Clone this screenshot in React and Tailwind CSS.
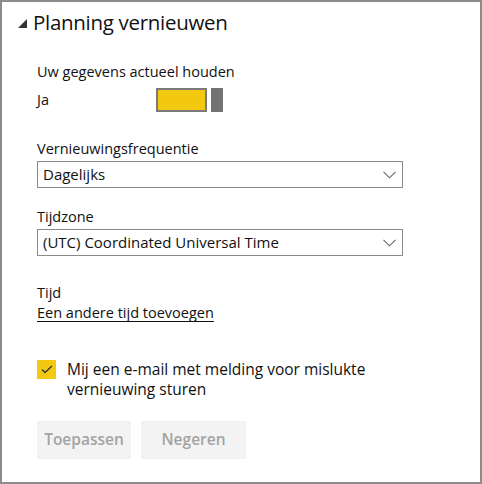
import { useState } from 'react';

function Chevron() {
  return (
    <svg width="13" height="8" viewBox="0 0 13 8" className="shrink-0">
      <path d="M0.5 0.8 L6.5 6.8 L12.5 0.8" fill="none" stroke="#666" strokeWidth="1.1" />
    </svg>
  );
}

function Dropdown({ value }) {
  return (
    <div className="flex items-center justify-between h-[27px] w-[366px] border border-[#8a8a8a] pl-[5px] pr-[6px]">
      <span className="text-[15px] text-[#111]">{value}</span>
      <Chevron />
    </div>
  );
}

export default function App() {
  const [aan, setAan] = useState(true);
  const [mail, setMail] = useState(true);

  return (
    <div
      className="w-[482px] h-[484px] border-2 border-[#8c8c8c] bg-white text-[#111] overflow-hidden"
      style={{ fontFamily: '"Open Sans", "Noto Sans", Arial, sans-serif' }}
    >
      {/* Kop */}
      <div className="flex items-center pl-[16px] pt-[6px]">
        <svg width="9" height="9" viewBox="0 0 9 9" className="mr-[6px] mt-[2px]">
          <polygon points="9,0 9,9 0,9" fill="#333" />
        </svg>
        <h1 className="text-[20.5px] leading-[28px] tracking-[-0.3px]">Planning vernieuwen</h1>
      </div>

      <div className="pl-[35px] pt-[26px]">
        <div className="text-[14.5px] leading-[20px]">Uw gegevens actueel houden</div>
        <div className="flex items-center mt-[6px]">
          <span className="text-[14.5px] w-[119px]">Ja</span>
          <button onClick={() => setAan(!aan)} className="flex items-center gap-[4px]">
            <span className={`block w-[51px] h-[24px] border-2 border-[#7a7a7a] ${aan ? 'bg-[#f2c811]' : 'bg-white'}`} />
            <span className="block w-[12px] h-[24px] bg-[#737373]" />
          </button>
        </div>

        <div className="text-[14.5px] leading-[20px] mt-[27px]">Vernieuwingsfrequentie</div>
        <div className="mt-[2px]">
          <Dropdown value="Dagelijks" />
        </div>

        <div className="text-[14.5px] leading-[20px] mt-[19px]">Tijdzone</div>
        <div className="mt-[2px]">
          <Dropdown value="(UTC) Coordinated Universal Time" />
        </div>

        <div className="text-[14.5px] leading-[20px] mt-[27px]">Tijd</div>
        <a className="block w-fit text-[14.5px] leading-[20px] underline underline-offset-[3px] cursor-pointer">
          Een andere tijd toevoegen
        </a>

        <div className="flex items-start mt-[36px]">
          <button
            onClick={() => setMail(!mail)}
            className={`flex items-center justify-center w-[19px] h-[19px] mt-[1px] shrink-0 ${mail ? 'bg-[#f2c811]' : 'border border-[#777]'}`}
          >
            {mail && (
              <svg width="12" height="9" viewBox="0 0 12 9">
                <path d="M1 4.5 L4 7.5 L11 1" fill="none" stroke="#333" strokeWidth="1.3" />
              </svg>
            )}
          </button>
          <p className="ml-[11px] text-[15.5px] leading-[20px] w-[340px]">
            Mij een e-mail met melding voor mislukte vernieuwing sturen
          </p>
        </div>

        <div className="flex gap-[10px] mt-[22px]">
          <button className="w-[94px] h-[38px] bg-[#f3f3f3] text-[#a3a3a3] text-[15.5px] font-semibold">
            Toepassen
          </button>
          <button className="w-[105px] h-[38px] bg-[#f3f3f3] text-[#a3a3a3] text-[15.5px] font-semibold">
            Negeren
          </button>
        </div>
      </div>
    </div>
  );
}
